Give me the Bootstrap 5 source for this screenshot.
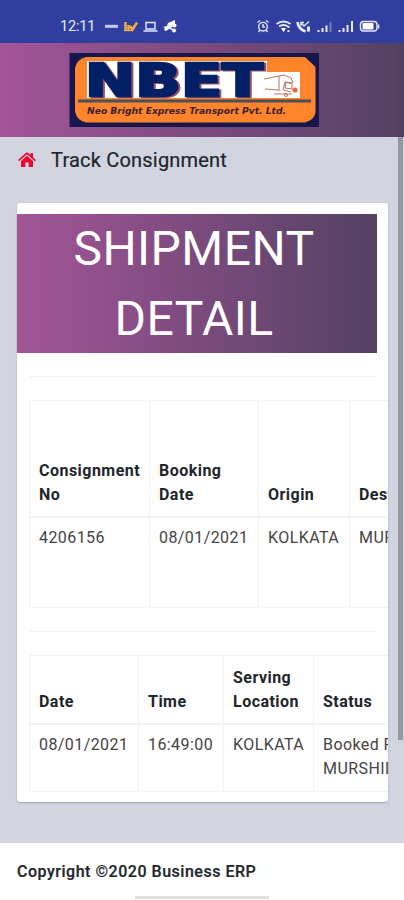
<!DOCTYPE html>
<html lang="en">
<head>
<meta charset="utf-8">
<meta name="viewport" content="width=device-width, initial-scale=1">
<title>Track Consignment</title>
<link href="https://cdn.jsdelivr.net/npm/bootstrap@5.3.0/dist/css/bootstrap.min.css" rel="stylesheet">
<style>
body{font-family:Roboto,"Liberation Sans",sans-serif;background:#d2d5e0;color:#212529;font-size:16px;line-height:24px;width:404px;height:900px;overflow:hidden}
.status{height:43px;background:#303f9f;color:#fff;padding:10px 0 0 60px}
.clock{font-size:14.5px;width:35px;line-height:34px;letter-spacing:-.2px;color:#e9ecff}
.brandbar{height:94px;background:linear-gradient(90deg,#a35597,#544164);padding:10px 0 0 69px}
.shade{filter:drop-shadow(2px 1px 0 #975061)}
.crumb{height:66px;padding:11px 0 0 18px}
.crumb svg{margin-top:4px}
.crumb h1{font-size:20px;line-height:24px;letter-spacing:.2px;margin:0 0 0 15px;font-weight:400;color:#20252b;-webkit-text-stroke:.2px}
.panel{width:371px;height:599px;margin-left:17px;background:#fff;border-radius:3px;overflow:hidden;box-shadow:0 1px 2px #9da2ad;padding-top:11px}
.banner{width:360px;height:139px;background:linear-gradient(90deg,#a35597,#544164);color:#fff;font-size:48px;line-height:70px;letter-spacing:.45px;text-align:center;font-weight:400;margin:0;padding-right:6px}
.rule{height:1px;background:#f3f3f4;margin:23px 0 23px 12px;width:348px}
.grid{table-layout:fixed;margin:0 0 0 12px;border-collapse:collapse;color:#444}
.grid th,.grid td{border:1px solid #f4f2f4;padding:8.5px 9px;white-space:nowrap;letter-spacing:.42px}
.grid th{vertical-align:bottom;padding-bottom:9px;color:#212529;font-weight:700;letter-spacing:.47px;border-bottom-width:2px}
.grid td{vertical-align:top}
.booking{width:440px}
.booking tr:first-child{height:116px}
.booking tr:last-child{height:91px}
.tracking{width:464px}
.tracking tr{height:68px}
.w85{width:85px}.w90{width:90px}.w91{width:91px}.w109{width:109px}.w120{width:120px}.w180{width:180px}
.foot{height:57px;margin-top:41px;background:#fff;padding:17px 0 0 17px}
.foot strong{font-weight:500;letter-spacing:.52px;-webkit-text-stroke:.2px}
.homebar{width:134px;height:3px;background:#e2e2e3;margin:12px 0 0 118px}
.thumb{left:398px;top:43px;width:5px;height:697px;background:rgba(70,70,82,.42)}
</style>
<script src="https://cdn.jsdelivr.net/npm/bootstrap@5.3.0/dist/js/bootstrap.bundle.min.js"></script>
</head>
<body class="position-relative">
<div class="status d-flex">
  <div class="clock">12:11</div>
  <svg width="298" height="33" viewBox="95 10 298 33" fill="none" stroke="#e4e8ff" stroke-width="1.4">
    <path d="M105 26.3h13" stroke-width="3" stroke="#c3caf0"/>
    <g stroke="#f2ad45"><path d="M125.500 22v9M128.500 25v6" stroke-width="2.500"/><path d="M130 26l2.500 3.500 4.500-7" stroke-width="2.500"/><path d="M124 30.500h9"/></g>
    <path d="M146 22.500h9v6.500h-9zM143.500 31h14"/>
    <g fill="#fff" stroke="none"><path d="M168 23l7-3v5l-3 2-6 4-2-1 1-2-2-1 4-1z"/><circle cx="174.500" cy="25.500" r="2"/><circle cx="174" cy="30.500" r="2"/></g><path d="M168 27l6 3.500M167 28l7-3" stroke-width="2"/>
    <circle cx="263" cy="26.700" r="4.300"/><path d="M263 24v3h2M257.500 22.500l2.500-2M268.500 22.500l-2.500-2M260 30l-1.500 2M266 30l1.500 2"/>
    <path d="M276.500 24q7-5 14 0M279 26.500q4.500-3 9 0" stroke-width="1.800"/><path d="M281 28.500q2.500-1.500 5 0l-2.500 3.500z" fill="#fff" stroke="none"/><path d="M288.500 26v2M288.500 30v2" stroke-width="2"/>
    <path d="M297.500 22q1 7 8 9.500" stroke-width="2.800"/><path d="M300.500 22.500l3.500 3.500 5-4.500M301 25.500v-3h3"/><path d="M308.500 26.500v5" stroke-width="3"/>
    <path d="M318.500 30v2M322.500 28v4M326.500 25.500v6.500" stroke-width="2"/><path d="M330.500 22v10" stroke-width="2" stroke="#6f7bc8"/>
    <path d="M339.500 30v2M343.500 28v4M347.500 25v7M352 21v11" stroke-width="2"/>
    <rect x="360.500" y="21.500" width="16.500" height="9.500" rx="3"/><rect x="362.500" y="23" width="11" height="6.500" rx="1" fill="#fff" stroke="none"/><path d="M378.500 24.500v4" stroke-width="1.500"/>
  </svg>
</div>
<header class="brandbar">
  <svg class="d-block" width="250" height="74" viewBox="69 53 250 74" role="img" aria-label="NBET">
    <path d="M69.500 53H319v74H69.500z" fill="#17174d"/>
    <path d="M86 57H305l10.500 10v45.500q-1 7-10.500 10H86q-9-2-11-11V68q2-9 11-11z" fill="#ff842c"/>
    <path d="M87 61H267v11h33v26H87z" fill="#fff"/>
    <path d="M267 58h15v13h-15z" fill="#ff842c"/>
    <text class="shade" y="95.500" font-family="DejaVu Sans" font-weight="700" font-size="45" fill="#031f66" stroke="#031f66" stroke-width="2.500" textLength="178" lengthAdjust="spacingAndGlyphs" x="85">NBET</text>
    <g fill="none" stroke="#b5654f" stroke-width=".9"><path d="M264 79l20-4M265 89l14 1M279 76v15M284 75l7 3 2 5-8-1-2 8 8 2M286 82l6 2v5l-7-1zM274 94h18"/><circle cx="286" cy="95" r="1.500"/></g><circle cx="295" cy="90" r="2.600" fill="#e46a3f"/>
    <path d="M78 101H311" stroke="#49505d" stroke-width="3"/>
    <text x="87" y="113.500" font-family="DejaVu Sans" font-size="9" font-weight="700" font-style="italic" fill="#3a2029" textLength="199" lengthAdjust="spacingAndGlyphs">Neo Bright Express Transport Pvt. Ltd.</text>
  </svg>
</header>
<nav class="crumb d-flex align-items-start">
  <svg width="18" height="16" viewBox="0 0 18 16" fill="#e80a32"><path d="M0 8L8 .8q1-.8 2 0L12.500 3V1H15v4.300L18 8l-1 1.200L9 2.300 1 9.200z"/><path d="M3 9l6-5.200L15 9v6h-4.400v-4.500H7.400V15H3z"/></svg>
  <h1>Track Consignment</h1>
</nav>
<main class="panel">
  <h2 class="banner">SHIPMENT<br>DETAIL</h2>
  <div class="rule"></div>
  <table class="grid booking">
    <colgroup><col class="w120"><col class="w109"><col class="w91"><col class="w120"></colgroup>
    <tr><th>Consignment<br>No</th><th>Booking<br>Date</th><th>Origin</th><th>Destination</th></tr>
    <tr><td>4206156</td><td>08/01/2021</td><td>KOLKATA</td><td>MURSHIDABAD</td></tr>
  </table>
  <div class="rule"></div>
  <table class="grid tracking">
    <colgroup><col class="w109"><col class="w85"><col class="w90"><col class="w180"></colgroup>
    <tr><th>Date</th><th>Time</th><th>Serving<br>Location</th><th>Status</th></tr>
    <tr><td>08/01/2021</td><td>16:49:00</td><td>KOLKATA</td><td>Booked For<br>MURSHIDABAD</td></tr>
  </table>
</main>
<footer class="foot"><strong class="d-block">Copyright ©2020 Business ERP</strong><div class="homebar"></div></footer>
<div class="thumb position-absolute"></div>
</body>
</html>
